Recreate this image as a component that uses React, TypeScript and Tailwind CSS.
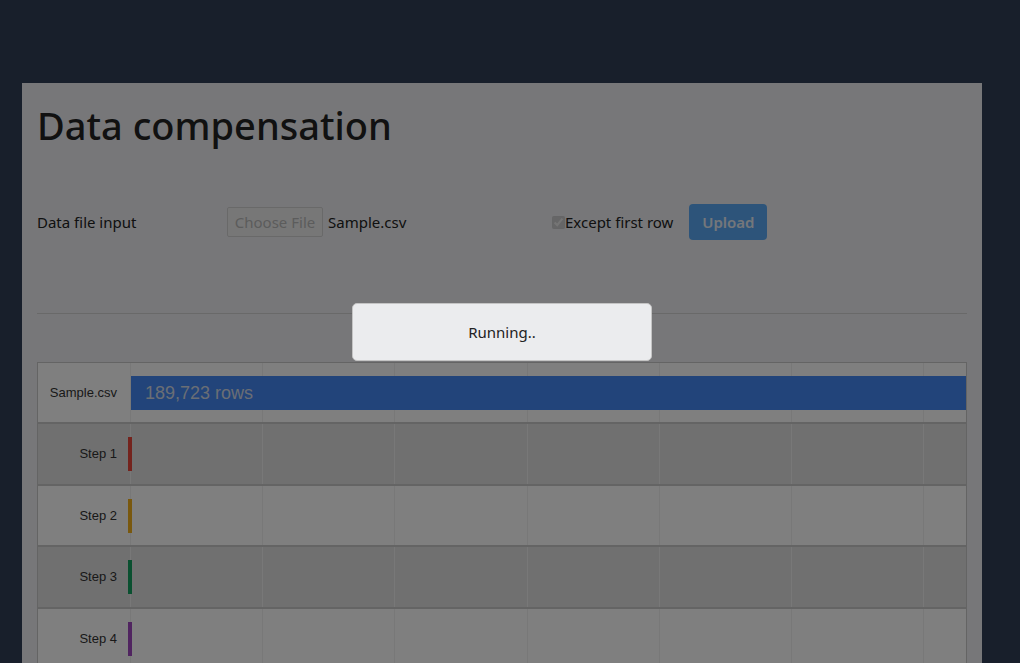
import React from "react";

const steps = [
  { name: "Step 1", color: "bg-[#e8473a]" },
  { name: "Step 2", color: "bg-[#f2b01c]" },
  { name: "Step 3", color: "bg-[#14a060]" },
  { name: "Step 4", color: "bg-[#a048c0]" },
];

const cols = [0, 1, 2, 3, 4, 5, 6];

function GridCells() {
  return (
    <div className="flex h-full">
      {cols.map((c) => (
        <div key={c} className="h-full w-[132.2px] shrink-0 border-l border-[#f0f0f0]" />
      ))}
    </div>
  );
}

export default function App() {
  return (
    <div className="min-h-[663px] bg-[#181f2b] pt-[83px] pl-[22px] font-['Noto_Sans',sans-serif]">
      {/* carte principal + backdrop do modal */}
      <div className="relative w-[960px] h-[580px] bg-[#eeeff2] overflow-hidden px-[15px]">
        <h1 className="pt-[18px] text-[38px] leading-[48px] font-medium text-[#222]">
          Data compensation
        </h1>

        {/* linha de input */}
        <div className="mt-[55px] flex items-center h-[36px] text-[15px] text-[#222]">
          <span className="w-[190px]">Data file input</span>
          <button className="h-[30px] w-[96px] border border-[#d2d2d2] rounded-[2px] bg-[#efefef] text-[#b8b8b8] text-[15px]">
            Choose File
          </button>
          <span className="ml-[5px] w-[224px]">Sample.csv</span>
          <label className="flex items-center">
            <input type="checkbox" defaultChecked disabled className="w-[13px] h-[13px] m-0" />
            <span>Except first row</span>
          </label>
          <button className="ml-[16px] h-[36px] w-[78px] rounded-[4px] bg-[#5aa9f4] text-[#e8eef6] font-semibold text-[15px]">
            Upload
          </button>
        </div>

        <hr className="mt-[73px] border-t border-[#d2d2d2]" />

        {/* tabela de passos */}
        <div className="mt-[48px] border border-[#c8c8c8] overflow-hidden font-['Liberation_Sans',sans-serif]">
          <div className="flex h-[61px] bg-white border-b-2 border-[#c8c8c8]">
            <div className="w-[92px] shrink-0 flex items-center justify-end pr-[13px] text-[13px] text-[#333]">Sample.csv</div>
            <div className="relative flex-1 overflow-hidden">
              <GridCells />
              <div className="absolute left-[1px] right-0 top-[13px] h-[34px] bg-[#4488f4] flex items-center pl-[14px] text-[18px] text-[#d4dcea]">
                189,723 rows
              </div>
            </div>
          </div>
          {steps.map((s, i) => (
            <div
              key={s.name}
              className={`relative flex h-[61.5px] border-b-2 border-[#c8c8c8] ${i % 2 === 0 ? "bg-[#e0e0e0]" : "bg-white"}`}
            >
              <div className="w-[92px] shrink-0 flex items-center justify-end pr-[13px] text-[13px] text-[#333]">{s.name}</div>
              <div className="flex-1 overflow-hidden">
                <GridCells />
              </div>
              <div className={`absolute left-[90px] top-[13px] w-[4px] h-[34px] ${s.color}`} />
            </div>
          ))}
        </div>

        {/* backdrop */}
        <div className="absolute inset-0 bg-black/50" />

        {/* modal Running */}
        <div className="absolute left-[330px] top-[220px] w-[300px] h-[58px] rounded-[5px] bg-[#ebecee] border border-[#c4c4c4] flex items-center justify-center text-[15px] text-[#222]">
          Running..
        </div>
      </div>
    </div>
  );
}
